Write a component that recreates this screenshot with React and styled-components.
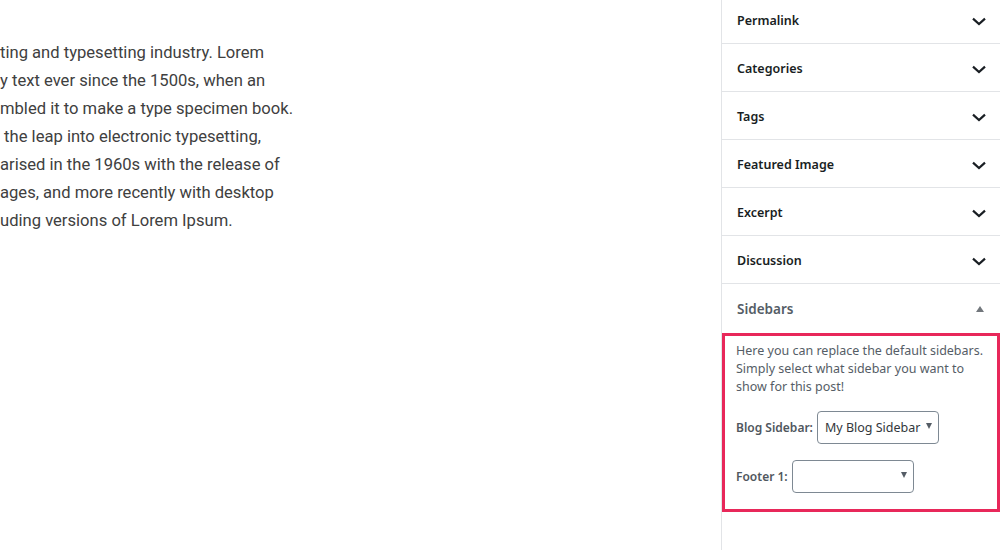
import React from "react";
import styled, { createGlobalStyle } from "styled-components";

const Global = createGlobalStyle`
  html, body { margin: 0; padding: 0; background: #fff; }
  body { width: 1000px; height: 550px; overflow: hidden; }
`;

const Page = styled.div`
  display: flex;
  width: 1000px;
  height: 550px;
  overflow: hidden;
`;

const Main = styled.main`
  flex: 1;
  padding-top: 39px;
  overflow: hidden;
`;

const Line = styled.div`
  font-family: Roboto, "Liberation Sans", sans-serif;
  font-size: 16.6px;
  line-height: 28px;
  color: #404040;
  white-space: pre;
`;

const Sidebar = styled.aside`
  width: 278px;
  border-left: 1px solid #e2e4e7;
  display: flex;
  flex-direction: column;
  font-family: "Noto Sans", "Open Sans", sans-serif;
`;

const Panels = styled.div`
  margin-top: -4px;
`;

const PanelRow = styled.div`
  box-sizing: border-box;
  height: 48px;
  border-bottom: 1px solid #e2e4e7;
  display: flex;
  align-items: center;
  justify-content: space-between;
  padding: 2px 9px 0 15px;
  font-size: 12.5px;
  font-weight: 600;
  color: #191e23;
`;

const BoxHeader = styled.div`
  box-sizing: border-box;
  height: 49px;
  display: flex;
  align-items: center;
  justify-content: space-between;
  padding: 1px 16px 0 15px;
  font-size: 13.5px;
  font-weight: 600;
  color: #555d66;
`;

const Highlight = styled.div`
  border: 3px solid #e8285a;
  padding: 6px 10px 16px 11px;
  font-size: 12.5px;
  color: #555d66;
`;

const Intro = styled.p`
  margin: 0;
  line-height: 18px;
`;

const Field = styled.div`
  display: flex;
  align-items: center;
  gap: 4px;
  margin-top: ${(p) => p.$top}px;
`;

const Label = styled.label`
  font-weight: 600;
  color: #50575e;
  font-size: 12px;
`;

const Select = styled.div`
  position: relative;
  box-sizing: border-box;
  width: 122px;
  height: 33px;
  border: 1px solid #7e8993;
  border-radius: 4px;
  padding: 0 20px 0 7px;
  display: flex;
  align-items: center;
  font-size: 12.5px;
  color: #32373c;
  white-space: nowrap;
`;

const Caret = styled.span`
  position: absolute;
  right: 6px;
  top: 11px;
  width: 0;
  height: 0;
  border-left: 3.5px solid transparent;
  border-right: 3.5px solid transparent;
  border-top: 6px solid #555d66;
`;

const UpTri = styled.span`
  width: 0;
  height: 0;
  border-left: 4px solid transparent;
  border-right: 4px solid transparent;
  border-bottom: 6px solid #72777c;
`;

const Chevron = () => (
  <svg width="24" height="24" viewBox="0 0 24 24" aria-hidden="true">
    <path d="M6 9.6 12 15l6-5.4" fill="none" stroke="#191e23" strokeWidth="2.2" />
  </svg>
);

const lines = [
  "ting and typesetting industry. Lorem",
  "y text ever since the 1500s, when an",
  "mbled it to make a type specimen book.",
  " the leap into electronic typesetting,",
  "arised in the 1960s with the release of",
  "ages, and more recently with desktop",
  "uding versions of Lorem Ipsum.",
];

const panels = ["Permalink", "Categories", "Tags", "Featured Image", "Excerpt", "Discussion"];

export default function App() {
  return (
    <>
      <Global />
      <Page>
        <Main>
          {lines.map((l, i) => (
            <Line key={i}>{l}</Line>
          ))}
        </Main>
        <Sidebar>
          <Panels>
            {panels.map((p) => (
              <PanelRow key={p}>
                <span>{p}</span>
                <Chevron />
              </PanelRow>
            ))}
          </Panels>
          <BoxHeader>
            <span>Sidebars</span>
            <UpTri />
          </BoxHeader>
          <Highlight>
            <Intro>
              Here you can replace the default sidebars. Simply select what sidebar you want to show for this post!
            </Intro>
            <Field $top={15}>
              <Label>Blog Sidebar:</Label>
              <Select>
                My Blog Sidebar
                <Caret />
              </Select>
            </Field>
            <Field $top={16}>
              <Label>Footer 1:</Label>
              <Select>
                <Caret />
              </Select>
            </Field>
          </Highlight>
        </Sidebar>
      </Page>
    </>
  );
}
